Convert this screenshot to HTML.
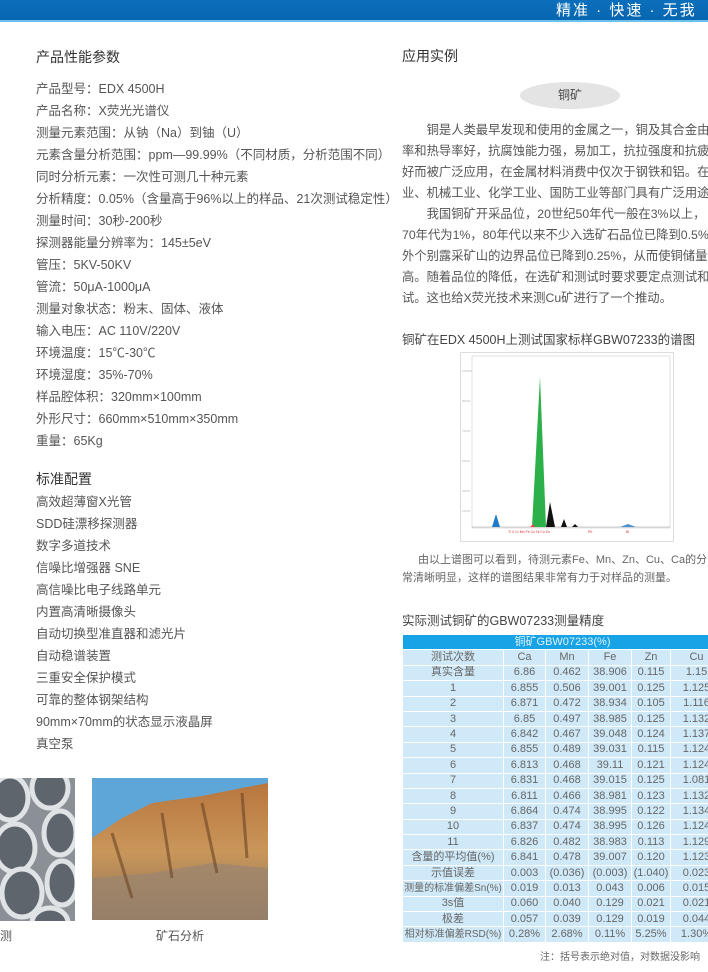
<!DOCTYPE html>
<html><head><meta charset="utf-8"><style>
*{margin:0;padding:0;box-sizing:border-box}
html,body{width:708px;height:972px;overflow:hidden;background:#fff}
body{font-family:"Liberation Sans","Noto Sans CJK SC",sans-serif;color:#555}
#w{position:relative;width:708px;height:972px;overflow:hidden}
.a{position:absolute;white-space:nowrap}
#hdr{position:absolute;left:0;top:0;width:708px;height:22px;background:linear-gradient(#0b6fbc,#0866b0);border-bottom:2px solid #6cc0ee}
.l{left:36px;font-size:12.5px;line-height:22px;height:22px}
.h{font-size:14px;color:#333}
.p{left:402px;font-size:12.3px;line-height:21px;color:#555}
table{border-collapse:collapse;font-size:11px;color:#666;table-layout:fixed}
td{background:#cfe9f8;border:1px solid #fff;height:15.4px;text-align:center;padding:0;line-height:13px;overflow:hidden;white-space:nowrap}
</style></head><body><div id="w">
<div id="hdr"></div>
<div class="a" style="left:556px;top:1px;color:#fff;font-size:15px;letter-spacing:2px;line-height:20px">精准 · 快速 · 无我</div>

<div class="a l h" style="top:46px">产品性能参数</div>
<div class="a l" style="top:78px">产品型号：EDX 4500H</div>
<div class="a l" style="top:100px">产品名称：X荧光光谱仪</div>
<div class="a l" style="top:122px">测量元素范围：从钠（Na）到铀（U）</div>
<div class="a l" style="top:144px">元素含量分析范围：ppm—99.99%（不同材质，分析范围不同）</div>
<div class="a l" style="top:166px">同时分析元素：一次性可测几十种元素</div>
<div class="a l" style="top:188px">分析精度：0.05%（含量高于96%以上的样品、21次测试稳定性）</div>
<div class="a l" style="top:210px">测量时间：30秒-200秒</div>
<div class="a l" style="top:232px">探测器能量分辨率为：145±5eV</div>
<div class="a l" style="top:254px">管压：5KV-50KV</div>
<div class="a l" style="top:276px">管流：50μA-1000μA</div>
<div class="a l" style="top:298px">测量对象状态：粉末、固体、液体</div>
<div class="a l" style="top:320px">输入电压：AC 110V/220V</div>
<div class="a l" style="top:342px">环境温度：15℃-30℃</div>
<div class="a l" style="top:364px">环境湿度：35%-70%</div>
<div class="a l" style="top:386px">样品腔体积：320mm×100mm</div>
<div class="a l" style="top:408px">外形尺寸：660mm×510mm×350mm</div>
<div class="a l" style="top:430px">重量：65Kg</div>

<div class="a l h" style="top:468px">标准配置</div>
<div class="a l" style="top:491px">高效超薄窗X光管</div>
<div class="a l" style="top:513px">SDD硅漂移探测器</div>
<div class="a l" style="top:535px">数字多道技术</div>
<div class="a l" style="top:557px">信噪比增强器 SNE</div>
<div class="a l" style="top:579px">高信噪比电子线路单元</div>
<div class="a l" style="top:601px">内置高清晰摄像头</div>
<div class="a l" style="top:623px">自动切换型准直器和滤光片</div>
<div class="a l" style="top:645px">自动稳谱装置</div>
<div class="a l" style="top:667px">三重安全保护模式</div>
<div class="a l" style="top:689px">可靠的整体钢架结构</div>
<div class="a l" style="top:711px">90mm×70mm的状态显示液晶屏</div>
<div class="a l" style="top:733px">真空泵</div>

<svg class="a" style="left:0;top:778px" width="75" height="143">
<rect width="75" height="143" fill="#8a9096"/>
<g fill="#5e656c" stroke="#dfe3e6" stroke-width="5">
<ellipse cx="10" cy="20" rx="18" ry="22"/><ellipse cx="50" cy="10" rx="18" ry="20"/>
<ellipse cx="15" cy="70" rx="20" ry="24"/><ellipse cx="60" cy="55" rx="16" ry="22"/>
<ellipse cx="22" cy="115" rx="20" ry="24"/><ellipse cx="62" cy="105" rx="15" ry="22"/>
<ellipse cx="50" cy="145" rx="18" ry="15"/></g></svg>
<svg class="a" style="left:92px;top:778px" width="176" height="142">
<defs><linearGradient id="r" x1="0" y1="0" x2="0" y2="1"><stop offset="0" stop-color="#b8763e"/><stop offset=".5" stop-color="#c9965a"/><stop offset="1" stop-color="#8d7458"/></linearGradient></defs>
<rect width="176" height="142" fill="#5fa6d8"/>
<path d="M0 60 L30 40 L60 25 L110 18 L150 10 L176 5 L176 142 L0 142Z" fill="url(#r)"/>
<path d="M0 100 L60 95 L120 85 L176 90 L176 142 L0 142Z" fill="#9a8470" opacity=".7"/>
<path d="M20 55 L40 120 M70 35 L80 100 M110 25 L125 95 M150 15 L155 80" stroke="#6b4424" stroke-width="3" opacity=".6"/>
</svg>
<div class="a" style="left:0;top:927px;font-size:12px">测</div>
<div class="a" style="left:156px;top:927px;font-size:12px">矿石分析</div>

<div class="a h" style="left:402px;top:46px">应用实例</div>
<div class="a" style="left:520px;top:82px;width:100px;height:27px;border-radius:50%;background:#e4e4e4;text-align:center;line-height:27px;font-size:12px;color:#444">铜矿</div>
<div class="a p" style="top:120px">　　铜是人类最早发现和使用的金属之一，铜及其合金由于导电</div>
<div class="a p" style="top:141px">率和热导率好，抗腐蚀能力强，易加工，抗拉强度和抗疲劳强度</div>
<div class="a p" style="top:162px">好而被广泛应用，在金属材料消费中仅次于钢铁和铝。在电气工</div>
<div class="a p" style="top:183px">业、机械工业、化学工业、国防工业等部门具有广泛用途。</div>
<div class="a p" style="top:204px">　　我国铜矿开采品位，20世纪50年代一般在3%以上，</div>
<div class="a p" style="top:225px">70年代为1%，80年代以来不少入选矿石品位已降到0.5%，</div>
<div class="a p" style="top:246px">外个别露采矿山的边界品位已降到0.25%，从而使铜储量大大提</div>
<div class="a p" style="top:267px">高。随着品位的降低，在选矿和测试时要求要定点测试和快速测</div>
<div class="a p" style="top:288px">试。这也给X荧光技术来测Cu矿进行了一个推动。</div>
<div class="a" style="left:402px;top:329px;font-size:12.5px;color:#444">铜矿在EDX 4500H上测试国家标样GBW07233的谱图</div>

<svg class="a" style="left:460px;top:352px" width="214" height="190">
<rect x="0.5" y="0.5" width="213" height="189" fill="#fff" stroke="#ddd"/>
<rect x="12" y="4" width="198" height="172" fill="#fff" stroke="#ccc" stroke-width=".6"/>
<g fill="#bbb" font-size="3"><text x="2" y="20">100000</text><text x="2" y="50">80000</text><text x="2" y="80">70000</text><text x="2" y="110">50000</text><text x="2" y="140">30000</text><text x="2" y="160">10000</text></g>
<line x1="12" y1="175" x2="210" y2="175" stroke="#999" stroke-width=".6"/>
<path d="M32 175 L36 162 L40 175Z" fill="#1e7cc8"/>
<path d="M72 175 L80 25 L86 175Z" fill="#2cb14a"/>
<path d="M86 175 L90 150 L95 175Z" fill="#111"/>
<path d="M101 175 L104 167 L107 175Z" fill="#111"/>
<path d="M112 175 L115 172 L118 175Z" fill="#111"/>
<path d="M70 175 L73 172 L75 175Z" fill="#e44"/>
<path d="M160 175 L168 172 L176 175Z" fill="#4a8fd0"/>
<g fill="#d33" font-size="3.5"><text x="48" y="181">Ti V Cr Mn Fe Co Ni Cu Zn</text><text x="128" y="181">Pb</text><text x="166" y="181">Bi</text></g>
</svg>

<div class="a" style="left:418px;top:551px;font-size:11px;color:#666">由以上谱图可以看到，待测元素Fe、Mn、Zn、Cu、Ca的分</div>
<div class="a" style="left:402px;top:569px;font-size:11px;color:#666">常清晰明显，这样的谱图结果非常有力于对样品的测量。</div>

<div class="a" style="left:402px;top:610px;font-size:12.5px;color:#444">实际测试铜矿的GBW07233测量精度</div>

<div class="a" style="left:402px;top:634px;width:306px;overflow:hidden">
<table style="width:320px">
<colgroup><col style="width:101px"><col style="width:42px"><col style="width:43px"><col style="width:43px"><col style="width:39px"><col style="width:52px"></colgroup>
<tr><td colspan="6" style="background:#17a3e6;color:#dff2fc">铜矿GBW07233(%)</td></tr>
<tr><td>测试次数</td><td>Ca</td><td>Mn</td><td>Fe</td><td>Zn</td><td>Cu</td></tr>
<tr><td>真实含量</td><td>6.86</td><td>0.462</td><td>38.906</td><td>0.115</td><td>1.15</td></tr>
<tr><td>1</td><td>6.855</td><td>0.506</td><td>39.001</td><td>0.125</td><td>1.125</td></tr>
<tr><td>2</td><td>6.871</td><td>0.472</td><td>38.934</td><td>0.105</td><td>1.116</td></tr>
<tr><td>3</td><td>6.85</td><td>0.497</td><td>38.985</td><td>0.125</td><td>1.132</td></tr>
<tr><td>4</td><td>6.842</td><td>0.467</td><td>39.048</td><td>0.124</td><td>1.137</td></tr>
<tr><td>5</td><td>6.855</td><td>0.489</td><td>39.031</td><td>0.115</td><td>1.124</td></tr>
<tr><td>6</td><td>6.813</td><td>0.468</td><td>39.11</td><td>0.121</td><td>1.124</td></tr>
<tr><td>7</td><td>6.831</td><td>0.468</td><td>39.015</td><td>0.125</td><td>1.081</td></tr>
<tr><td>8</td><td>6.811</td><td>0.466</td><td>38.981</td><td>0.123</td><td>1.132</td></tr>
<tr><td>9</td><td>6.864</td><td>0.474</td><td>38.995</td><td>0.122</td><td>1.134</td></tr>
<tr><td>10</td><td>6.837</td><td>0.474</td><td>38.995</td><td>0.126</td><td>1.124</td></tr>
<tr><td>11</td><td>6.826</td><td>0.482</td><td>38.983</td><td>0.113</td><td>1.129</td></tr>
<tr><td>含量的平均值(%)</td><td>6.841</td><td>0.478</td><td>39.007</td><td>0.120</td><td>1.123</td></tr>
<tr><td>示值误差</td><td>0.003</td><td>(0.036)</td><td>(0.003)</td><td>(1.040)</td><td>0.023</td></tr>
<tr><td style="font-size:10px">测量的标准偏差Sn(%)</td><td>0.019</td><td>0.013</td><td>0.043</td><td>0.006</td><td>0.015</td></tr>
<tr><td>3s值</td><td>0.060</td><td>0.040</td><td>0.129</td><td>0.021</td><td>0.021</td></tr>
<tr><td>极差</td><td>0.057</td><td>0.039</td><td>0.129</td><td>0.019</td><td>0.044</td></tr>
<tr><td style="font-size:10px">相对标准偏差RSD(%)</td><td>0.28%</td><td>2.68%</td><td>0.11%</td><td>5.25%</td><td>1.30%</td></tr>
</table></div>
<div class="a" style="left:540px;top:948px;font-size:10px;color:#666">注：括号表示绝对值，对数据没影响</div>
</div></body></html>
